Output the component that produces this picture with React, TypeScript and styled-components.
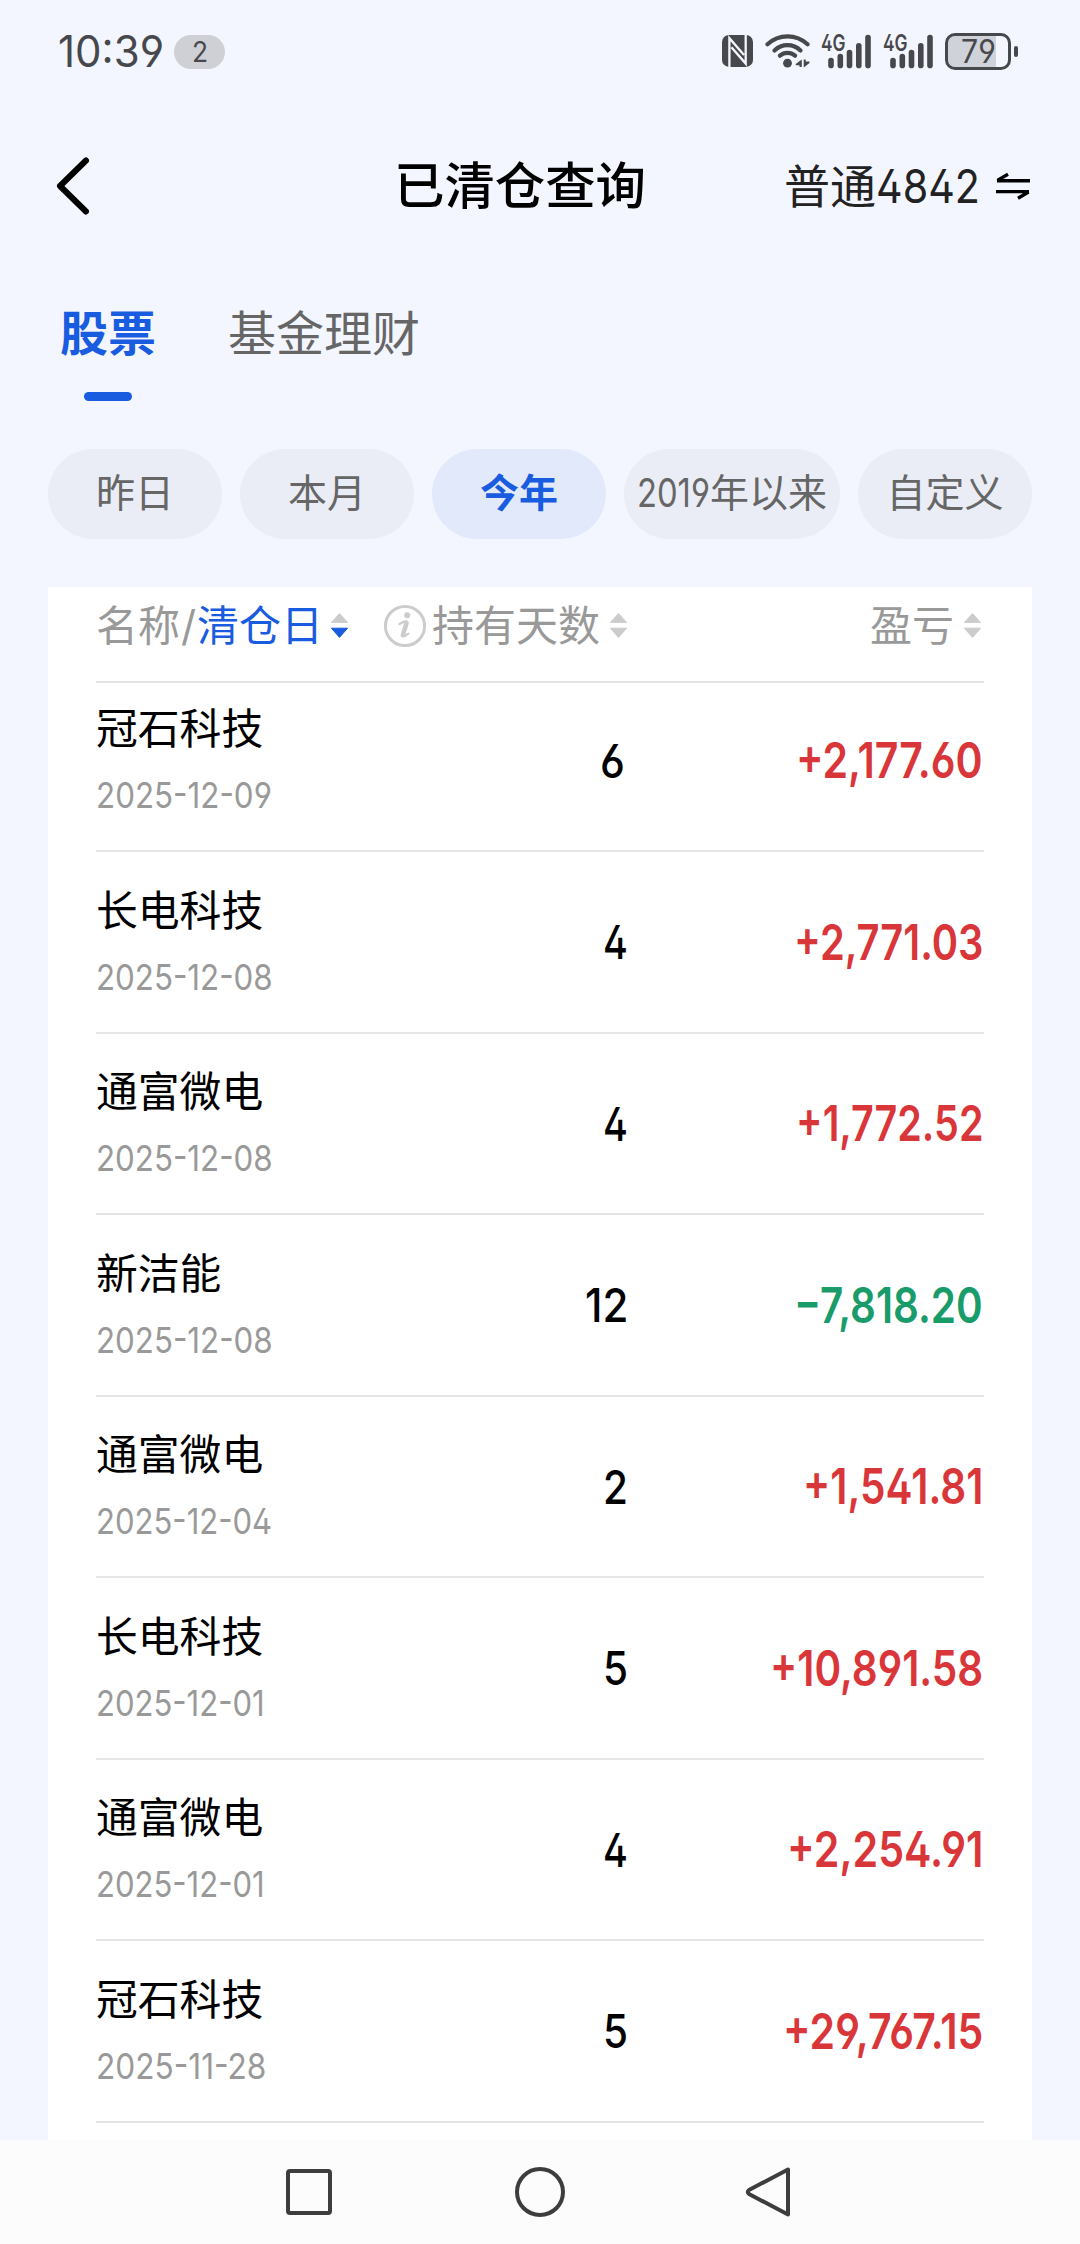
import React, { useLayoutEffect, useRef, useState } from "react";
import styled, { createGlobalStyle } from "styled-components";

const color = {
  page: "#f3f6ff",
  ink: "#000000",
  status: "#47484b",
  muted: "#999999",
  sub: "#666666",
  blue: "#1a5cdf",
  rise: "#d9363a",
  fall: "#199b6a",
  line: "#e5e5e5",
  arrow: "#cccccc",
};

const GlobalStyle = createGlobalStyle`
  *, *::before, *::after { box-sizing: border-box; }
  body {
    margin: 0;
    background: ${color.page};
    font-family: Inter, "Noto Sans CJK SC", sans-serif;
    font-feature-settings: "cv02", "cv03", "cv04";
  }
`;

/* ---------- narrow figures ---------- */

const FigureBox = styled.span<{ $right?: boolean }>`
  display: inline-flex;
  flex: none;
  justify-content: ${(p) => (p.$right ? "flex-end" : "flex-start")};
  white-space: nowrap;
`;

const FigureText = styled.span<{ $right?: boolean }>`
  flex: none;
  transform-origin: ${(p) => (p.$right ? "right" : "left")} center;
`;

/* Condenses a run of digits so that it takes exactly `width` pixels. */
function Figures({ width, right, children }: { width: number; right?: boolean; children: string }) {
  const ref = useRef<HTMLSpanElement>(null);
  const [scale, setScale] = useState(1);
  useLayoutEffect(() => {
    if (ref.current) setScale(width / ref.current.offsetWidth);
  }, [width, children]);
  return (
    <FigureBox $right={right} style={{ width }}>
      <FigureText ref={ref} $right={right} style={{ transform: `scaleX(${scale})` }}>
        {children}
      </FigureText>
    </FigureBox>
  );
}

/* ---------- status bar ---------- */

const Screen = styled.div`
  width: 1080px;
  height: 2244px;
  display: flex;
  flex-direction: column;
  overflow: hidden;
  background: ${color.page};
`;

const StatusBar = styled.div`
  height: 102px;
  flex: none;
  display: flex;
  align-items: center;
  padding: 0 62px 0 58px;
  color: ${color.status};
`;

const Clock = styled.div`
  font-size: 44px;
  line-height: 52px;
`;

const Badge = styled.div`
  width: 51px;
  height: 34px;
  margin: 1px 0 0 10px;
  border-radius: 17px;
  background: #cfd0d6;
  display: flex;
  align-items: center;
  justify-content: center;
  font-size: 28px;
  line-height: 34px;
`;

const StatusIcons = styled.div`
  margin-left: auto;
  display: flex;
  align-items: center;
`;

const Glyph = styled.svg<{ $gap?: number }>`
  display: block;
  flex: none;
  margin-left: ${(p) => p.$gap ?? 0}px;
`;

const Battery = styled.div`
  width: 66px;
  height: 37px;
  margin-left: 11px;
  border: 3px solid ${color.status};
  border-radius: 10px;
  background: linear-gradient(to right, #d0d2d9 80%, transparent 80%) padding-box;
  display: flex;
  align-items: center;
  justify-content: center;
  font-size: 32px;
  line-height: 31px;
`;

const BatteryCap = styled.div`
  width: 4px;
  height: 11px;
  margin-left: 3px;
  border-radius: 2px;
  background: ${color.status};
`;

const Nfc = () => (
  <Glyph width="33" height="34" viewBox="11 13.4 33 34">
    <rect x="12" y="14.3" width="31" height="32" rx="7" fill={color.status} />
    <path d="M19.4 46.6V17.6L34 34.4M35.7 14V43L21.4 26.6" fill="none" stroke={color.page} strokeWidth="2.3" />
  </Glyph>
);

const Wifi = () => (
  <Glyph $gap={11} width="46" height="36" viewBox="54.5 12.5 46 36" fill="none" stroke={color.status} strokeWidth="4.2" strokeLinecap="round">
    <path d="M57 23.8A29 29 0 0 1 97 23.8" />
    <path d="M64 30A18.5 18.5 0 0 1 90 30" />
    <path d="M69.4 35.2A11.5 11.5 0 0 1 84.6 35.2" />
    <circle cx="77" cy="42.7" r="4.4" fill={color.status} stroke="none" />
    <path d="M91.3 39V46.5H89V44.8H85.2V43.4ZM93.2 39H95.2V41H99V42.4L93.2 47Z" fill={color.status} stroke="none" />
  </Glyph>
);

const bars = [
  [16, 36.7],
  [25.3, 32.7],
  [34.5, 28.7],
  [43.8, 22],
  [53, 13.7],
];

const Signal = ({ gap }: { gap: number }) => (
  <Glyph $gap={gap} width="52" height="56" viewBox="5 2 52 56" fill={color.status}>
    {bars.map(([x, y]) => (
      <rect key={x} x={x - 2.8} y={y} width="5.6" height={47.2 - y} rx="2.8" />
    ))}
    <text x="6" y="30" fontSize="22.5" fontWeight="600" textLength="24.5" lengthAdjust="spacingAndGlyphs">
      4G
    </text>
  </Glyph>
);

/* ---------- title bar ---------- */

const TitleBar = styled.header`
  height: 168px;
  flex: none;
  display: flex;
  align-items: center;
  padding: 0 49px 0 55px;
`;

const Title = styled.h1`
  margin: 0 0 0 303px;
  font-size: 50.4px;
  line-height: 60px;
  font-weight: 500;
  color: ${color.ink};
`;

const Account = styled.div`
  margin-left: auto;
  display: flex;
  align-items: center;
  font-size: 46px;
  line-height: 60px;
  color: #222222;
`;

/* ---------- tabs ---------- */

const Tabs = styled.nav`
  flex: none;
  display: flex;
  gap: 72px;
  padding: 34px 60px 0;
`;

const Tab = styled.div<{ $active?: boolean }>`
  display: flex;
  flex-direction: column;
  align-items: center;
  font-size: 48px;
  line-height: 60px;
  font-weight: ${(p) => (p.$active ? 700 : 400)};
  color: ${(p) => (p.$active ? color.blue : color.sub)};

  &::after {
    content: "";
    width: 48px;
    height: 9px;
    margin-top: 28px;
    border-radius: 4.5px;
    background: ${(p) => (p.$active ? color.blue : "transparent")};
  }
`;

/* ---------- period chips ---------- */

const Chips = styled.div`
  flex: none;
  display: flex;
  gap: 18px;
  padding: 48px 48px 0;
`;

const Chip = styled.div<{ $active?: boolean; $wide?: boolean }>`
  width: ${(p) => (p.$wide ? 216 : 174)}px;
  height: 90px;
  padding-bottom: 2px;
  border-radius: 45px;
  display: flex;
  align-items: center;
  justify-content: center;
  font-size: 39px;
  line-height: 48px;
  font-weight: ${(p) => (p.$active ? 700 : 400)};
  color: ${(p) => (p.$active ? color.blue : color.sub)};
  background: ${(p) => (p.$active ? "#e1e9fb" : "#eaedf6")};
`;

/* ---------- list ---------- */

const Card = styled.section`
  flex: 1;
  min-height: 0;
  margin: 48px 48px 0;
  padding: 0 48px;
  overflow: hidden;
  background: #ffffff;
`;

const ListHead = styled.div`
  height: 96px;
  padding-bottom: 17px;
  display: grid;
  grid-template-columns: 534px 1fr;
  align-items: center;
  border-bottom: 2px solid ${color.line};
  font-size: 42px;
  line-height: 56px;
  color: ${color.muted};
`;

const HeadLeft = styled.div`
  display: flex;
  align-items: center;
`;

const HeadLabel = styled.div<{ $active?: boolean; $gap?: number }>`
  margin-left: ${(p) => p.$gap ?? 0}px;
  padding-top: 1px;
  white-space: nowrap;
  color: ${(p) => (p.$active ? color.blue : "inherit")};
`;

const Slash = styled.div`
  width: 17px;
  text-align: center;
`;

const HeadRight = styled(HeadLeft)`
  justify-content: flex-end;
  padding-right: 2px;
`;

const Sort = ({ down, gap }: { down?: boolean; gap: number }) => (
  <Glyph $gap={gap} width="19" height="27" viewBox="0 0 19 27" strokeLinejoin="round" strokeWidth="1">
    <path d="M9.5 1.6L17.6 10.4H1.4Z" fill={color.arrow} stroke={color.arrow} />
    <path d="M9.5 25.4L17.6 16.2H1.4Z" fill={down ? color.blue : color.arrow} stroke={down ? color.blue : color.arrow} />
  </Glyph>
);

const Info = () => (
  <Glyph $gap={34} width="44" height="44" viewBox="0 0 44 44">
    <circle cx="22" cy="22" r="19.6" fill="none" stroke={color.arrow} strokeWidth="3" />
    <circle cx="24.2" cy="11.2" r="3" fill={color.arrow} />
    <path
      d="M16.4 20.2C19 18.2 21.6 17.2 23.6 17.4 25 17.6 24.8 19 24.4 20.4L20.8 31.6C20.6 32.4 21.2 32.4 22 32L25.4 29.6"
      fill="none"
      stroke={color.arrow}
      strokeWidth="2.2"
      strokeLinecap="round"
    />
    <path d="M22.8 19.4L19.4 31.6" stroke={color.arrow} strokeWidth="3.6" strokeLinecap="round" />
  </Glyph>
);

const Row = styled.div`
  height: 181.57px;
  padding-top: 31.57px;
  display: grid;
  grid-template-columns: 300px 234px 1fr;
  grid-template-rows: 116px;
  align-items: center;
  border-bottom: 2px solid ${color.line};

  &:nth-child(2) {
    height: 169px;
    padding-top: 19px;
  }
`;

const Stock = styled.div`
  display: flex;
  flex-direction: column;
  gap: 18px;
`;

const StockName = styled.div`
  font-size: 41.8px;
  line-height: 52px;
  color: ${color.ink};
`;

const StockDate = styled.div`
  display: flex;
  font-size: 36px;
  line-height: 44px;
  color: ${color.muted};
`;

const Days = styled.div<{ $inset: number }>`
  display: flex;
  justify-content: flex-end;
  padding: 1px ${(p) => p.$inset}px 0 0;
  font-size: 47px;
  line-height: 56px;
  font-weight: 500;
  color: ${color.ink};
`;

const Profit = styled.div<{ $fall?: boolean }>`
  display: flex;
  justify-content: flex-end;
  padding-right: 1px;
  font-size: 50px;
  line-height: 60px;
  font-weight: 600;
  color: ${(p) => (p.$fall ? color.fall : color.rise)};
`;

/* ---------- system navigation ---------- */

const NavBar = styled.footer`
  height: 104px;
  flex: none;
  display: flex;
  align-items: center;
  justify-content: center;
  gap: 175px;
  background: #fcfcfc;
`;

type Trade = {
  name: string;
  date: string;
  dateWidth: number;
  days: string;
  daysWidth: number;
  inset: number;
  profit: string;
  profitWidth: number;
};

const trades: Trade[] = [
  { name: "冠石科技", date: "2025-12-09", dateWidth: 176, days: "6", daysWidth: 25, inset: 5, profit: "+2,177.60", profitWidth: 187 },
  { name: "长电科技", date: "2025-12-08", dateWidth: 176.5, days: "4", daysWidth: 25, inset: 2, profit: "+2,771.03", profitWidth: 189 },
  { name: "通富微电", date: "2025-12-08", dateWidth: 176.5, days: "4", daysWidth: 25, inset: 2, profit: "+1,772.52", profitWidth: 187 },
  { name: "新洁能", date: "2025-12-08", dateWidth: 176.5, days: "12", daysWidth: 43, inset: 2, profit: "−7,818.20", profitWidth: 189 },
  { name: "通富微电", date: "2025-12-04", dateWidth: 176, days: "2", daysWidth: 25, inset: 2, profit: "+1,541.81", profitWidth: 180 },
  { name: "长电科技", date: "2025-12-01", dateWidth: 169, days: "5", daysWidth: 25, inset: 2, profit: "+10,891.58", profitWidth: 213 },
  { name: "通富微电", date: "2025-12-01", dateWidth: 169, days: "4", daysWidth: 25, inset: 2, profit: "+2,254.91", profitWidth: 196 },
  { name: "冠石科技", date: "2025-11-28", dateWidth: 170.5, days: "5", daysWidth: 25, inset: 2, profit: "+29,767.15", profitWidth: 200 },
];

export default function App() {
  return (
    <>
      <GlobalStyle />
      <Screen>
        <StatusBar>
          <Clock>
            <Figures width={106}>10:39</Figures>
          </Clock>
          <Badge>
            <Figures width={16}>2</Figures>
          </Badge>
          <StatusIcons>
            <Nfc />
            <Wifi />
            <Signal gap={9} />
            <Signal gap={10} />
            <Battery>
              <Figures width={35}>79</Figures>
            </Battery>
            <BatteryCap />
          </StatusIcons>
        </StatusBar>

        <TitleBar>
          <Glyph width="36" height="60" viewBox="0 0 36 60" fill="none" stroke="#000" strokeWidth="6" strokeLinecap="round" strokeLinejoin="round">
            <path d="M31 4.5L5 30L31 55.5" />
          </Glyph>
          <Title>已清仓查询</Title>
          <Account>
            普通<Figures width={104}>4842</Figures>
            <Glyph $gap={15} width="36" height="28" viewBox="0 0 36 28" fill="none" stroke="#000" strokeWidth="3.4">
              <path d="M35 8.8H2M2.4 8.4L13 2.2M1 19.6H34M33.6 20L23 26.2" />
            </Glyph>
          </Account>
        </TitleBar>

        <Tabs>
          <Tab $active>股票</Tab>
          <Tab>基金理财</Tab>
        </Tabs>

        <Chips>
          <Chip>昨日</Chip>
          <Chip>本月</Chip>
          <Chip $active>今年</Chip>
          <Chip $wide>
            <Figures width={73}>2019</Figures>年以来
          </Chip>
          <Chip>自定义</Chip>
        </Chips>

        <Card>
          <ListHead>
            <HeadLeft>
              <HeadLabel>名称</HeadLabel>
              <Slash>/</Slash>
              <HeadLabel $active>清仓日</HeadLabel>
              <Sort down gap={7} />
              <Info />
              <HeadLabel $gap={5}>持有天数</HeadLabel>
              <Sort gap={9} />
            </HeadLeft>
            <HeadRight>
              <HeadLabel>盈亏</HeadLabel>
              <Sort gap={9} />
            </HeadRight>
          </ListHead>
          {trades.map((t, i) => (
            <Row key={i}>
              <Stock>
                <StockName>{t.name}</StockName>
                <StockDate>
                  <Figures width={t.dateWidth}>{t.date}</Figures>
                </StockDate>
              </Stock>
              <Days $inset={t.inset}>
                <Figures right width={t.daysWidth}>
                  {t.days}
                </Figures>
              </Days>
              <Profit $fall={t.profit.startsWith("−")}>
                <Figures right width={t.profitWidth}>
                  {t.profit}
                </Figures>
              </Profit>
            </Row>
          ))}
        </Card>

        <NavBar>
          <Glyph width="56" height="56" viewBox="0 0 56 56" fill="none" stroke="#3d3d3d" strokeWidth="4">
            <rect x="7" y="7" width="42" height="42" rx="2" />
          </Glyph>
          <Glyph width="56" height="56" viewBox="0 0 56 56" fill="none" stroke="#3d3d3d" strokeWidth="4">
            <circle cx="28" cy="28" r="23" />
          </Glyph>
          <Glyph width="56" height="56" viewBox="0 0 56 56" fill="none" stroke="#3d3d3d" strokeWidth="4" strokeLinejoin="round">
            <path d="M45 5.5V50.5L6 30Q3.5 28 6 26Z" />
          </Glyph>
        </NavBar>
      </Screen>
    </>
  );
}
